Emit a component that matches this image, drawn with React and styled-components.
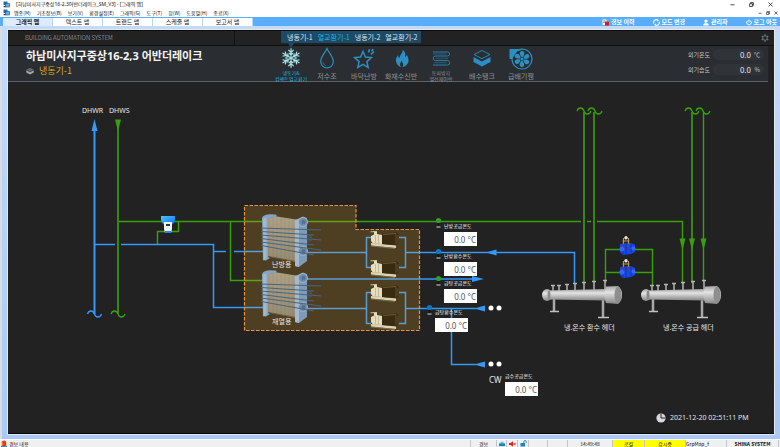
import React from "react";
import styled, { createGlobalStyle, css } from "styled-components";

const GREEN = "#38a10a";
const DARK_GREEN = "#37860f";
const BLUE = "#3399ff";
const KR = '"Noto Sans CJK KR", sans-serif';
const MIXED = '"Noto Sans", "Noto Sans CJK KR", sans-serif';

const GlobalStyle = createGlobalStyle`
  *, *::before, *::after { box-sizing: border-box; }
  body { margin: 0; background: #fff; font-family: ${KR}; line-height: 1; }
  button, input { font: inherit; color: inherit; margin: 0; padding: 0; border: 0; background: none; }
  h1, p { margin: 0; }
  svg { display: block; flex: none; }
`;

/* ---------- window chrome ---------- */

const Page = styled.div`
  display: flex;
  flex-direction: column;
  min-height: 100vh;
`;

const ChromeRow = styled.div`
  display: flex;
  align-items: center;
  height: ${(p) => p.$height}px;
  padding: 0 2px 0 3px;
  gap: 6px;
  font-size: 5px;
  color: #111;
  background: #fff;
`;

const WindowTitle = styled.p`
  font-size: 5px;
  line-height: 8px;
  font-family: ${MIXED};
`;

const WindowButtons = styled.div`
  display: flex;
  gap: ${(p) => p.$gap}px;
  margin-left: auto;
  padding-right: ${(p) => p.$end}px;
`;

const IconButton = styled.button`
  display: flex;
  align-items: center;
  justify-content: center;
`;

const MenuButton = styled.button`
  line-height: 9px;
  white-space: nowrap;
`;

const MenuList = styled.nav`
  display: flex;
  gap: 6px;
  margin-left: -2px;
`;

const Strip = styled.div`
  display: flex;
  align-items: stretch;
  justify-content: space-between;
  height: 9px;
  padding: 1px 3px 0;
  background: #58aefb;
`;

const TabList = styled.div`
  display: flex;
`;

const MapTab = styled.button`
  width: 50px;
  line-height: 8px;
  font-size: 6px;
  color: #222;
  background: #fff;
  border-right: 1px solid #b8d6f5;
  ${(p) =>
    p.$active &&
    css`
      font-weight: 700;
      background: #dcecfd;
    `}
`;

const Actions = styled.div`
  display: flex;
  gap: 18px;
`;

const Action = styled.button`
  display: flex;
  align-items: center;
  gap: 2px;
  font-size: 6px;
  font-weight: 700;
  line-height: 8px;
  color: #fff;
  white-space: nowrap;
`;

const Frame = styled.div`
  flex: 1;
  padding: 4px 6px 5px 6px;
  background: linear-gradient(#c3dafa, #abc9f6);
  border-left: 2px solid #d8dce4;
`;

const Screen = styled.main`
  background: #222;
  color: #ddd;
  border-bottom: 1px solid #0a0606;
  outline: 1px solid #e4e9ef;
`;

/* ---------- screen header ---------- */

const TopRow = styled.div`
  display: flex;
  height: 16px;
  padding-right: 5px;
  border-top: 1px solid #0c0c0c;
  border-bottom: 1px solid #0e0f10;
`;

const Brand = styled.p`
  width: 227px;
  padding-left: 17px;
  border-right: 1px solid #111;
  font-size: 6px;
  font-weight: 300;
  line-height: 14px;
  color: #b8b8b8;
`;

const Popover = styled.nav`
  position: relative;
  display: flex;
  gap: 5px;
  height: 12px;
  margin-left: 46px;
  padding: 0 4px 0 6px;
  background: #1d4a66;
  &::after {
    content: "";
    position: absolute;
    left: 7px;
    top: 100%;
    border: 3px solid transparent;
    border-top: 5px solid #1d4a66;
    border-bottom: 0;
  }
`;

const PopoverLink = styled.a`
  font-size: 7px;
  line-height: 12px;
  text-decoration: none;
  white-space: nowrap;
  color: ${(p) => (p.$active ? "#14b8e4" : "#dde4e8")};
`;

const Settings = styled(IconButton)`
  margin-left: auto;
`;

const HeaderBand = styled.header`
  display: grid;
  grid-template-columns: 265px auto 1fr;
  height: 36px;
  margin-right: 6px;
  background: #2a2d31;
  border-bottom: 1px solid #5d6064;
`;

const Heading = styled.div`
  padding: 2px 0 0 18px;
`;

const SiteName = styled.h1`
  font-family: ${MIXED};
  font-size: 11px;
  font-weight: 700;
  line-height: 16px;
  color: #f4f4f4;
  white-space: nowrap;
`;

const Equipment = styled.p`
  display: flex;
  align-items: center;
  gap: 5px;
  font-size: 9px;
  line-height: 14px;
  color: #d8ac10;
`;

const EquipmentNav = styled.nav`
  display: grid;
  grid-template-columns: 36px 36px 38px 36px 44px 38px 40px;
`;

const EquipmentLink = styled.a`
  display: flex;
  flex-direction: column;
  align-items: center;
  padding-top: 1px;
  text-decoration: none;
  white-space: nowrap;
  color: ${(p) => (p.$active ? "#16b4dc" : "#8f9498")};
`;

const EquipmentLabel = styled.span`
  display: flex;
  flex-direction: column;
  justify-content: center;
  height: 12px;
  text-align: center;
  font-size: ${(p) => (p.$small ? 5 : 7)}px;
  line-height: ${(p) => (p.$small ? 6 : 12)}px;
`;

const Readings = styled.div`
  display: flex;
  flex-direction: column;
  align-items: flex-end;
  gap: 4px;
  padding: 3px 4px 0 0;
`;

const Reading = styled.label`
  display: flex;
  align-items: center;
  gap: 3px;
  font-size: 6px;
  line-height: 11px;
  color: #c6c8ca;
`;

const Pill = styled.span`
  display: flex;
  align-items: center;
  width: 51px;
  height: 11px;
  padding-right: 4px;
  border-radius: 6px;
  background: #303439;
`;

const PillInput = styled.input`
  width: 38px;
  height: 11px;
  padding: 0;
  font-size: 8px;
  text-align: right;
  color: #e4e6e8;
`;

const PillUnit = styled.span`
  flex: 1;
  text-align: right;
`;

/* ---------- diagram ---------- */

const CANVAS = { x: 8, y: 82, w: 766, h: 351 };

const Canvas = styled.section`
  position: relative;
  width: 100%;
  aspect-ratio: ${CANVAS.w} / ${CANVAS.h};
`;

const Piping = styled.svg`
  width: 100%;
  height: 100%;
`;

const pinned = css`
  position: absolute;
  left: ${(p) => ((p.$x - CANVAS.x) / CANVAS.w) * 100}%;
  top: ${(p) => ((p.$y - CANVAS.y) / CANVAS.h) * 100}%;
`;

const Tag = styled.span`
  ${pinned}
  font-family: ${MIXED};
  font-size: ${(p) => p.$size || 7}px;
  line-height: 10px;
  white-space: nowrap;
  color: #e6e6e6;
`;

const Sensor = styled.label`
  ${pinned}
  display: flex;
  flex-direction: column;
  width: 33px;
  font-size: 5px;
  line-height: 7px;
  white-space: nowrap;
  color: #fff;
`;

const SensorValue = styled.input`
  width: 33px;
  height: 14px;
  margin-top: 3px;
  padding-right: 1px;
  background: #fff;
  font-family: ${MIXED};
  font-size: 8px;
  text-align: right;
  color: #555;
`;

const Stamp = styled.time`
  ${pinned}
  display: flex;
  align-items: center;
  gap: 4px;
  font-family: ${MIXED};
  font-size: 7px;
  line-height: 10px;
  white-space: nowrap;
  color: #e2e2e2;
`;

/* ---------- status bar ---------- */

const StatusBar = styled.footer`
  display: flex;
  align-items: stretch;
  height: 8px;
  padding-right: 1px;
  background: #f0f0f0;
  font-size: 5px;
  line-height: 7px;
  color: #111;
  border-top: 1px solid #fbfbfb;
`;

const StatusCell = styled.div`
  display: flex;
  align-items: center;
  justify-content: ${(p) => p.$align || "center"};
  gap: 2px;
  width: ${(p) => p.$width}px;
  ${(p) => p.$grow && "flex: 1; padding-left: 1px;"}
  border-right: 1px solid #c4c4c4;
  background: ${(p) => (p.$alert ? "#ffff00" : "transparent")};
  font-weight: ${(p) => (p.$strong ? 700 : 400)};
  white-space: nowrap;
`;

/* ---------- icons ---------- */

const AppIcon = () => (
  <svg width="7" height="7" viewBox="0 0 7 7">
    <rect x="0.5" y="0.5" width="4" height="3.5" fill="#2a6fb5" />
    <rect x="2.5" y="2.5" width="4" height="3.5" fill="#5ab0e8" stroke="#1c4f86" strokeWidth="0.6" />
    <rect x="0.5" y="5" width="2" height="1.2" fill="#444" />
  </svg>
);

const Minimize = ({ size }) => (
  <svg width={size} height={size} viewBox="0 0 5 5" stroke="#222" strokeWidth="0.8">
    <path d="M0.5 2.8h4" />
  </svg>
);
const Restore = ({ size }) => (
  <svg width={size} height={size} viewBox="0 0 5 5" stroke="#222" strokeWidth="0.8" fill="none">
    <path d="M0.6 1.7h2.8v2.8H0.6zM1.6 1.6V0.6h2.8v2.8h-1" />
  </svg>
);
const Close = ({ size }) => (
  <svg width={size} height={size} viewBox="0 0 5 5" stroke="#222" strokeWidth="0.8">
    <path d="M0.6 0.6l3.8 3.8M4.4 0.6L0.6 4.4" />
  </svg>
);

const AlarmIcon = () => (
  <svg width="7" height="7" viewBox="0 0 7 7">
    <path d="M0.5 0.500h4v5.500h-4z" fill="#fff" />
    <rect x="3" y="2.6" width="4" height="4" fill="#d51c1c" />
    <path d="M1.2 2h2.300M1.2 3.500h1.4" stroke="#c33" strokeWidth="0.8" />
  </svg>
);
const ModeIcon = () => (
  <svg width="7" height="7" viewBox="0 0 7 7" fill="none" stroke="#fff" strokeWidth="1.1">
    <path d="M1 4.6A2.6 2.6 0 0 1 4.6 1.1M6 2.4A2.6 2.6 0 0 1 2.4 5.9" />
    <path d="M4 0l1.9 1.3L4 2.6zM3 7L1.1 5.7 3 4.4z" fill="#fff" stroke="none" />
  </svg>
);
const UserIcon = () => (
  <svg width="6" height="7" viewBox="0 0 6 7" fill="#fff">
    <circle cx="3" cy="2.1" r="1.7" />
    <path d="M0.3 6.4V5.4Q0.5 3.9 3 3.9T5.7 5.4v1z" />
  </svg>
);
const PowerIcon = () => (
  <svg width="6" height="7" viewBox="0 0 6 7" fill="none" stroke="#fff" strokeWidth="1">
    <path d="M1.7 1.7a2.3 2.3 0 1 0 2.6 0M3 0.5v3" />
  </svg>
);
const GearIcon = () => (
  <svg width="8" height="8" viewBox="0 0 16 16" fill="none" stroke="#68727c" strokeWidth="2">
    <circle cx="8" cy="8" r="4.500" />
    <path d="M8 0.500v3M8 12.500v3M1.500 4.250l2.600 1.500M11.900 10.250l2.600 1.500M1.500 11.750l2.600-1.500M11.900 5.750l2.600-1.500" strokeWidth="3" />
  </svg>
);
const CubeIcon = () => (
  <svg width="8" height="8" viewBox="0 0 8 8">
    <path d="M0.3 2.8L4 0.8l3.7 2L4 4.8z" fill="#63676b" />
    <path d="M0.3 3.3L4 5.3l3.7-2v2.2L4 7.5 0.3 5.5z" fill="#a3a8ad" />
  </svg>
);

const NavSvg = ({ children, color = "#2a8fc2" }) => (
  <svg width="24" height="23" viewBox="0 0 24 23" fill="none" stroke={color} strokeWidth="1.2">
    {children}
  </svg>
);

const Snowflake = () => (
  <NavSvg color="#a5e6ea">
    {[0, 60, 120, 180, 240, 300].map((a) => (
      <path key={a} transform={`rotate(${a} 12 11)`} d="M12 11V1.2M9.3 2.8L12 5.5l2.7-2.7M9.8 5.8L12 8l2.2-2.2" />
    ))}
  </NavSvg>
);
const Drop = () => (
  <NavSvg>
    <path d="M12 1.5C10 6 5.7 9.5 5.7 14.6a6.3 6.3 0 0 0 12.6 0C18.3 9.5 14 6 12 1.5Z" />
    <path d="M8 15.2a4.2 4.2 0 0 0 2.6 3.6" strokeWidth="0.7" />
  </NavSvg>
);
const StarIcon = () => (
  <NavSvg>
    <path d="M11 4.5l2.4 5.5 6 .6-4.5 4 1.3 5.9-5.2-3.1-5.2 3.1 1.3-5.9-4.5-4 6-.6z" strokeWidth="1.5" />
    <path d="M16.5 5.5l1-3.2M19 7.3l3-2.8M19.8 4.3l1.2-2.3" strokeWidth="1.7" />
  </NavSvg>
);
const Flame = () => (
  <NavSvg>
    <path
      d="M12.5 2.5c.8 3.5-3 5.5-3 8.5-1-.5-1.5-1.5-1.3-3C6.5 10 5.5 12 6 14.5c.6 3 3 5 5 5.7-1.6-2.2-1-4.6.8-6.4.1 1.7 1.5 2.2 1.4 3.9 0 1-.4 1.8-.9 2.500 3-.4 5.700-2.900 6.200-5.900.3-2.600-.8-4.300-1.500-6.500-.5 1.200-1 1.900-2 2.300 1-3-.2-6-2.500-7.600z"
      transform="translate(1 0)"
      fill="#2a8fc2"
      stroke="none"
    />
  </NavSvg>
);
const Coil = () => (
  <NavSvg color="#2481b0">
    <path d="M4 5h14.5a1.500 1.500 0 0 1 0 4H6.500a1.500 1.500 0 0 0 0 4.500h12a1.500 1.500 0 0 1 0 4.500H4" strokeWidth="1" />
    <path d="M4 7h13.500M7 11.200h12M5 15.700h12.500" strokeWidth="0.6" />
  </NavSvg>
);
const Tank = () => (
  <NavSvg>
    <path d="M4 7.5L12 3.5l8 4-8 4.2z" strokeWidth="0.9" />
    <path d="M3.5 10l8.5 4.4 8.500-4.400v5L12 19.500 3.500 15z" fill="#2a8fc2" stroke="none" />
  </NavSvg>
);
const Fan = () => (
  <NavSvg>
    <path d="M0.5 2h14L8 4.5 3 12H0.5z" fill="#2a8fc2" stroke="none" />
    <circle cx="13" cy="12" r="10" />
    {[0, 60, 120, 180, 240, 300].map((a) => (
      <path key={a} transform={`rotate(${a} 13 12)`} d="M12.5 10C10 7 10.5 4 13 4s3.5 2.5 .8 6z" fill="#2a8fc2" stroke="none" />
    ))}
    <circle cx="13" cy="12" r="1.5" fill="#2a8fc2" stroke="none" />
  </NavSvg>
);

const ClockIcon = () => (
  <svg width="10" height="10" viewBox="0 0 10 10">
    <circle cx="5" cy="5" r="4.6" fill="#d9d9d9" />
    <path d="M5 0.8V5h4.2" fill="none" stroke="#222" strokeWidth="1" />
  </svg>
);
const SirenIcon = () => (
  <svg width="6" height="7" viewBox="0 0 6 7">
    <path d="M0.8 6V2Q1 0.5 3 0.5T5.2 2v4z" fill="#f0390a" />
    <path d="M1.2 2v3" stroke="#ffa040" strokeWidth="1" />
    <path d="M0 6.5h6" stroke="#3d91a8" />
  </svg>
);
const PrinterIcon = () => (
  <svg width="6" height="6" viewBox="0 0 6 6">
    <path d="M1.5 0.8h3v2h-3z" fill="#6db6dd" />
    <path d="M0 2.4h6v2.8H0z" fill="#1784bd" />
  </svg>
);
const MuteIcon = () => (
  <svg width="7" height="6" viewBox="0 0 7 6" fill="#e02418">
    <path d="M0 2h1.5L4 0.3v5.4L1.5 4H0zM4.6 2.3h2v1.4h-2z" />
  </svg>
);
const LockIcon = () => (
  <svg width="7" height="7" viewBox="0 0 7 7">
    <path d="M0.5 3h4.5v3.5H0.5z" fill="#1784bd" />
    <path d="M3.8 3V1.7a1.2 1.2 0 0 1 2.4 0V3" fill="none" stroke="#1784bd" strokeWidth="0.9" />
  </svg>
);

/* ---------- diagram parts ---------- */

const Exchanger = ({ x, y }) => (
  <g transform={`translate(${x} ${y})`}>
    <path d="M5 4.5L16 2.5 35 5.5V48L5 42z" fill="url(#plates)" />
    <path d="M8 4v39M12 4v39M16 3.5v41M20 3.500v42M24 4v42M28 5v42M32 5v42" stroke="#756b55" strokeWidth="0.5" opacity="0.35" />
    <path d="M5 42L35 47.500" stroke="#665c45" />
    <path d="M1 4Q2 0.800 8 0.300L15 0.500 16 2.500 7 4.500V43L9 44 5 46.500 2 46z" fill="#86a3c0" />
    <path d="M2 4.500L5.500 3.500V45L2.500 46.500z" fill="#9fb9d2" />
    <path d="M34 6L42 2.500 46 4V47L38 53 34 52z" fill="#7f9bb8" />
    <path d="M34 6L38 5V53L34 52z" fill="#a2bad1" />
    <circle cx="42" cy="8" r="4.500" fill="#6f8ba8" stroke="#9ab5d0" />
    <circle cx="42.5" cy="8" r="2" fill="#56718d" />
    <circle cx="42" cy="37" r="4.500" fill="#6f8ba8" stroke="#9ab5d0" />
    <circle cx="42.5" cy="37" r="2" fill="#56718d" />
    {[0, 1, 2, 3, 4, 5].map((i) => (
      <path key={i} d={`M0 ${14 + i * 3.5}L${i % 2 ? 53 : 60} ${16 + i * 5}`} stroke="#4a647f" strokeWidth="1" />
    ))}
    <path d="M46 21l5-1v7l-5 2z" fill="#46586a" opacity="0.6" />
  </g>
);

const Pump = ({ y }) => (
  <g transform={`translate(370 ${y})`}>
    <path d="M1 12L26 14.500V17L1 14.500z" fill="#ddd4b4" />
    <path d="M1 15L25 17.500" stroke="#8c8263" strokeWidth="0.7" />
    <path d="M12 2.500L27 1.500 29 4V12L26 14 12 13z" fill="#382b12" />
    <path d="M13 3.500L26 2.500" stroke="#6d5a30" />
    <path d="M26 3v10M28 4v8" stroke="#6d6042" strokeWidth="0.7" />
    <path d="M1 5L4 3.500V1H7V3L12 4V13L3 12.500 1 10z" fill="#e6deba" />
    <path d="M5.500 4v8M8.500 4v8.500" stroke="#a1977a" strokeWidth="0.5" />
    <path d="M0.5 0.800h3M3 0.500h4" stroke="#c9bf9a" />
  </g>
);

const BluePump = ({ y }) => (
  <g transform={`translate(619 ${y})`}>
    <path d="M1 8L12 7 16 9V16L12 18 4 19 1 16z" fill="#1548e8" />
    <path d="M4 9v9M7 8.500v10M12 7.500v10" stroke="#0a2ea6" strokeWidth="0.700" />
    <circle cx="3" cy="13" r="2.500" fill="#2f67ff" />
    <circle cx="14.500" cy="12.500" r="2" fill="#2f67ff" />
    <path d="M3.500 5h7M4.500 2v6M9.500 2v6" stroke="#b69a57" strokeWidth="1.2" />
    <path d="M4 7Q3 12 6 13M10 7Q9 12 12 13" fill="none" stroke="#9c3c2b" strokeWidth="0.8" />
    <circle cx="7" cy="1.800" r="1.700" fill="#ece7d6" />
  </g>
);

const Header = ({ x }) => (
  <g transform={`translate(${x} 280)`}>
    {[[11, 5], [17, 5], [25, 4], [33, 3], [42, 2], [52, 1], [63, 0]].map(([nx, top]) => (
      <path key={nx} d={`M${nx - 2} ${top + 0.5}h4M${nx} ${top}V11`} stroke="#b4b4b4" strokeWidth="1.5" />
    ))}
    <path d="M12 18V31M61 18V37" stroke="#a9a9a9" strokeWidth="2.5" />
    <path d="M8 31.500h9M56 37.500h11" stroke="#c1c1c1" strokeWidth="1.5" />
    <ellipse cx="5" cy="15" rx="5" ry="6" fill="url(#steel)" />
    <path d="M6 10.500L64 9V20.500L6 19.500z" fill="url(#steel)" />
    <ellipse cx="7" cy="15" rx="1.5" ry="4.500" fill="#8b8b8b" />
    <path d="M64 6.500L76 6Q80 9 80 15T76 24L64 23Q61 15 64 6.500z" fill="url(#steel)" />
    <ellipse cx="76" cy="15" rx="3.500" ry="8.500" fill="#8e8e8e" />
  </g>
);

const Probe = ({ x, y, color }) => (
  <g>
    <path d={`M${x} ${y}v6`} stroke="#111" strokeWidth="1.5" />
    <circle cx={x} cy={y} r="2.6" fill={color} />
    <path d={`M${x - 2} ${y + 6.5}h4`} stroke="#ddd" />
  </g>
);

const Wave = ({ x, y, color }) => (
  <path d={`M${x - 7} ${y + 1}q1-3 3.5-3t3.5 3 3.5 3 3.5-3`} fill="none" stroke={color} strokeWidth="1.3" />
);

const Diagram = () => (
  <Piping viewBox={`${CANVAS.x} ${CANVAS.y} ${CANVAS.w} ${CANVAS.h}`} aria-hidden="true">
    <defs>
      <linearGradient id="steel" x1="0" y1="0" x2="0" y2="1">
        <stop offset="0" stopColor="#a2a2a2" />
        <stop offset="0.35" stopColor="#e4e4e4" />
        <stop offset="1" stopColor="#858585" />
      </linearGradient>
      <linearGradient id="plates" x1="0" y1="0" x2="0" y2="1">
        <stop offset="0" stopColor="#aca185" />
        <stop offset="1" stopColor="#958b70" />
      </linearGradient>
      <linearGradient id="meter" x1="0" y1="0" x2="1" y2="1">
        <stop offset="0" stopColor="#4cc6ff" />
        <stop offset="1" stopColor="#0b6ef0" />
      </linearGradient>
    </defs>

    <g fill="none" stroke={GREEN} strokeWidth="1.4">
      <path d="M118 221.500H581M587 221.500H591M597 221.500H682.500V284" />
      <path d="M230.500 221.500V280.500H263" />
      <path d="M178.500 222V231.500H157.500V244" />
      <path d="M605.500 283V249.500H652.500V285M605.500 272.500H652.500" />
      <path d="M703.500 112V282" />
    </g>
    <g fill="none" stroke={DARK_GREEN} strokeWidth="2">
      <path d="M118 122V314M584 112V283M594 112V282M692 112V283" />
    </g>
    <g fill="none" stroke={BLUE} strokeWidth="1.5">
      <path d="M94.500 125V314" strokeWidth="2" />
      <path d="M94 244.500H115M121 244.500H213.500V307.500H264M213.500 251.500H226M234 251.500H264" />
      <path d="M308 252.500H366.500M405.500 252.500H574.500V284" />
      <path d="M371 237.500H366.500V267.500H371M398 237.500H405.500V267.500H398" />
      <path d="M305 279H474" />
      <path d="M308 308.500H366.500M405.500 308.500H476M451.500 308.500V364.500H476" />
      <path d="M371 292.500H366.500V323.500H371M398 292.500H405.500V323.500H398" />
    </g>
    <g fill={BLUE}>
      <path d="M94.500 119L97.500 131H91.500zM486 252.500L496.500 249.500V255.500zM484 279L472 276V282zM474 308.500L485 305.500V311.500zM474 364.500L485 361.500V367.500z" />
    </g>
    <g fill={GREEN}>
      <path d="M115 119.500H121L118 131zM679.500 238.500H685.500L682.500 250zM689 238.500H695L692 250zM700.500 238.500H706.500L703.500 250z" />
    </g>
    <Wave x={94.5} y={313} color={BLUE} />
    <Wave x={118} y={313} color={GREEN} />
    {[584, 595, 692, 703].map((x) => (
      <Wave key={x} x={x} y={110} color={GREEN} />
    ))}

    <path d="M244.500 205.500H356V229.500H419.500V330.500H244.500z" fill="#ffb428" fillOpacity="0.2" stroke="#e8943c" strokeWidth="1.2" strokeDasharray="3.5 1.5" />

    <Exchanger x={261} y={214} />
    <Exchanger x={261} y={270} />
    {[231, 260, 284, 312].map((y) => (
      <Pump key={y} y={y} />
    ))}
    <BluePump y={236} />
    <BluePump y={259} />
    <Header x={542} />
    <Header x={641} />

    <path d="M161 216H175V220Q174 224 171 225H165Q162 224 161 220z" fill="url(#meter)" />
    <path d="M164 222h8v7l-1 4h-6l-1-4z" fill="#f0f2f4" />
    <path d="M166 224h4v2h-4z" fill="#273746" />
    <path d="M165 231h6v2h-6z" fill="#1a8ae0" />

    <Probe x={438.5} y={220.5} color="#2f9e2c" />
    <Probe x={438.5} y={251.5} color="#0f78c4" />
    <Probe x={438.5} y={278.5} color="#2f9e2c" />
    <Probe x={429.5} y={307.5} color="#0f78c4" />
    <g fill="#fff">
      {[308, 364].flatMap((y) => [491, 499].map((x) => <circle key={`${x}-${y}`} cx={x} cy={y} r="2.5" />))}
    </g>
  </Piping>
);

/* ---------- data ---------- */

const MENUS = ["맵종(M)", "기초정보(B)", "보기(V)", "환경설정(E)", "그래픽(G)", "도구(T)", "창(W)", "도움말(H)", "종료(X)"];
const TABS = ["그래픽 맵", "텍스트 맵", "트랜드 맵", "스케줄 맵", "보고서 맵"];
const ACTIONS = [
  ["경보 이력", AlarmIcon],
  ["모드 변경", ModeIcon],
  ["관리자", UserIcon],
  ["로그 아웃", PowerIcon],
];
const UNITS = ["냉동기-1", "열교환기-1", "냉동기-2", "열교환기-2"];
const EQUIPMENT = [
  { lines: ["냉동기&", "컴팩트열교환기"], Icon: Snowflake, active: true },
  { lines: ["저수조"], Icon: Drop },
  { lines: ["바닥난방"], Icon: StarIcon },
  { lines: ["화재수신반"], Icon: Flame },
  { lines: ["동파방지", "열선제어반"], Icon: Coil },
  { lines: ["배수탱크"], Icon: Tank },
  { lines: ["급배기휀"], Icon: Fan },
];
const SENSORS = [
  ["난방공급온도", 444, 222],
  ["난방환수온도", 444, 252],
  ["급탕공급온도", 444, 279],
  ["급탕환수온도", 435, 308],
  ["급수공급온도", 505, 372],
];
const TAGS = [
  ["DHWR", 82, 106],
  ["DHWS", 109, 106],
  ["난방용", 272, 260],
  ["재열용", 272, 317],
  ["냉.온수 환수 헤더", 564, 323],
  ["냉.온수 공급 헤더", 663, 323],
  ["CW", 489, 375, 8],
];

export default function App() {
  return (
    <Page>
      <GlobalStyle />
      <ChromeRow $height={8}>
        <AppIcon />
        <WindowTitle>[하남미사지구중상16-2,3어반더레이크_SM_V3] - [그래픽 맵]</WindowTitle>
        <WindowButtons $gap={14} $end={5}>
          <IconButton aria-label="최소화"><Minimize size={5} /></IconButton>
          <IconButton aria-label="이전 크기"><Restore size={5} /></IconButton>
          <IconButton aria-label="닫기"><Close size={5} /></IconButton>
        </WindowButtons>
      </ChromeRow>
      <ChromeRow $height={9}>
        <AppIcon />
        <MenuList>
          {MENUS.map((m) => (
            <MenuButton key={m}>{m}</MenuButton>
          ))}
        </MenuList>
        <WindowButtons $gap={4} $end={0}>
          <IconButton aria-label="맵 최소화"><Minimize size={4} /></IconButton>
          <IconButton aria-label="맵 이전 크기"><Restore size={4} /></IconButton>
          <IconButton aria-label="맵 닫기"><Close size={4} /></IconButton>
        </WindowButtons>
      </ChromeRow>
      <Strip>
        <TabList role="tablist">
          {TABS.map((t, i) => (
            <MapTab key={t} role="tab" aria-selected={i === 0} $active={i === 0}>{t}</MapTab>
          ))}
        </TabList>
        <Actions>
          {ACTIONS.map(([label, Icon]) => (
            <Action key={label}><Icon />{label}</Action>
          ))}
        </Actions>
      </Strip>

      <Frame>
        <Screen>
          <TopRow>
            <Brand>BUILDING AUTOMATION SYSTEM</Brand>
            <Popover>
              {UNITS.map((u, i) => (
                <PopoverLink key={u} href="#" $active={i === 1}>{u}</PopoverLink>
              ))}
            </Popover>
            <Settings aria-label="설정"><GearIcon /></Settings>
          </TopRow>
          <HeaderBand>
            <Heading>
              <SiteName>하남미사지구중상16-2,3 어반더레이크</SiteName>
              <Equipment><CubeIcon />냉동기-1</Equipment>
            </Heading>
            <EquipmentNav>
              {EQUIPMENT.map(({ lines, Icon, active }) => (
                <EquipmentLink key={lines[0]} href="#" $active={active}>
                  <Icon />
                  <EquipmentLabel $small={lines.length > 1}>
                    {lines.map((l) => (
                      <span key={l}>{l}</span>
                    ))}
                  </EquipmentLabel>
                </EquipmentLink>
              ))}
            </EquipmentNav>
            <Readings>
              <Reading>
                외기온도
                <Pill><PillInput readOnly value="0.0" /><PillUnit>℃</PillUnit></Pill>
              </Reading>
              <Reading>
                외기습도
                <Pill><PillInput readOnly value="0.0" /><PillUnit>%</PillUnit></Pill>
              </Reading>
            </Readings>
          </HeaderBand>

          <Canvas>
            <Diagram />
            {TAGS.map(([text, x, y, size]) => (
              <Tag key={text} $x={x} $y={y} $size={size}>{text}</Tag>
            ))}
            {SENSORS.map(([text, x, y]) => (
              <Sensor key={text} $x={x} $y={y}>
                {text}
                <SensorValue readOnly value="0.0 °C" />
              </Sensor>
            ))}
            <Stamp $x={656} $y={413} dateTime="2021-12-20T14:51:11">
              <ClockIcon />
              2021-12-20 02:51:11 PM
            </Stamp>
          </Canvas>
        </Screen>
      </Frame>

      <StatusBar>
        <StatusCell $grow $align="flex-start"><SirenIcon />경보 내용</StatusCell>
        <StatusCell $width={26}>경보</StatusCell>
        <StatusCell $width={10}><PrinterIcon /></StatusCell>
        <StatusCell $width={11}><MuteIcon /></StatusCell>
        <StatusCell $width={11}><LockIcon /></StatusCell>
        <StatusCell $width={19} />
        <StatusCell $width={20} />
        <StatusCell $width={45}>14:49:48</StatusCell>
        <StatusCell $width={32} $alert>로컬</StatusCell>
        <StatusCell $width={41} $alert>감시중</StatusCell>
        <StatusCell $width={41} $align="flex-start">GrpMap_f</StatusCell>
        <StatusCell $width={52} $strong>SHINA SYSTEM</StatusCell>
      </StatusBar>
    </Page>
  );
}
